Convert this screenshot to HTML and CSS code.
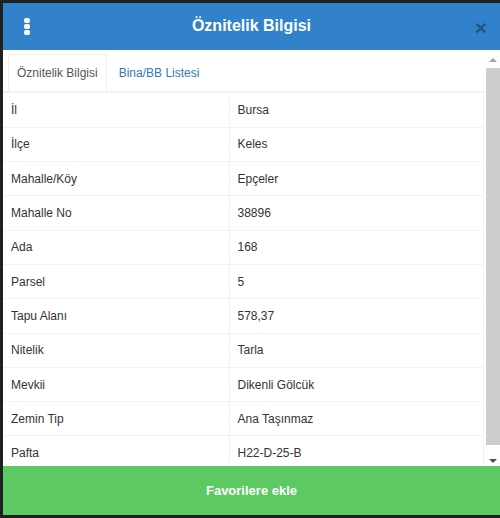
FILE: index.html
```html
<!DOCTYPE html>
<html lang="tr">
<head>
    <meta charset="UTF-8">
    <title>Öznitelik Bilgisi</title>
    <link rel="stylesheet" href="styles.css">
</head>
<body>
    <div class="modal">
        <div class="modal-header">
            <span class="menu-dots"><i></i><i></i><i></i></span>
            <h1>Öznitelik Bilgisi</h1>
            <span class="close">&times;</span>
        </div>

        <div class="modal-body">
            <div class="body-content">
                <ul class="tabs">
                    <li class="active">Öznitelik Bilgisi</li>
                    <li>Bina/BB Listesi</li>
                </ul>

                <table class="info-table">
                    <tr><td>İl</td><td>Bursa</td></tr>
                    <tr><td>İlçe</td><td>Keles</td></tr>
                    <tr><td>Mahalle/Köy</td><td>Epçeler</td></tr>
                    <tr><td>Mahalle No</td><td>38896</td></tr>
                    <tr><td>Ada</td><td>168</td></tr>
                    <tr><td>Parsel</td><td>5</td></tr>
                    <tr><td>Tapu Alanı</td><td>578,37</td></tr>
                    <tr><td>Nitelik</td><td>Tarla</td></tr>
                    <tr><td>Mevkii</td><td>Dikenli Gölcük</td></tr>
                    <tr><td>Zemin Tip</td><td>Ana Taşınmaz</td></tr>
                    <tr><td>Pafta</td><td>H22-D-25-B</td></tr>
                </table>
            </div>

            <!-- scrollbar drawn by hand, headless hides the native one -->
            <div class="scrollbar">
                <span class="arrow up"></span>
                <span class="thumb"></span>
                <span class="arrow down"></span>
            </div>
        </div>

        <button class="fav-btn">Favorilere ekle</button>
    </div>
</body>
</html>
```

FILE: styles.css
```css
* {
    margin: 0;
    padding: 0;
    box-sizing: border-box;
}

body {
    font-family: "Liberation Sans", Arial, sans-serif;
    font-size: 12px;
    color: #333;
    background: #1f2120;
    padding: 3px 0 0 3px;
    height: 518px;
    overflow: hidden;
}

.modal {
    width: 497px;
    height: 512px;
    background: white;
    display: flex;
    flex-direction: column;
}

.modal-header {
    height: 47px;
    background: #3182ca;
    display: grid;
    grid-template-columns: 1fr auto 1fr;
    align-items: center;
}

.menu-dots {
    display: flex;
    flex-direction: column;
    gap: 1px;
    margin-left: 21px;
}

.menu-dots i {
    width: 6px;
    height: 5px;
    border-radius: 2px;
    background: white;
}

.modal-header h1 {
    color: white;
    font-size: 16px;
    font-weight: bold;
    margin-top: -1px;
}

.close {
    justify-self: end;
    font-size: 21px;
    font-weight: bold;
    color: #000;
    opacity: 0.35;
    margin-right: 13px;
    line-height: 1;
    margin-top: 1px;
}

.modal-body {
    flex: 1;
    display: flex;
    overflow: hidden;
}

.body-content {
    flex: 1;
    overflow: hidden;
}

.tabs {
    list-style: none;
    display: flex;
    padding: 4px 0 0 5px;
    border-bottom: 2px solid #f1f1f1;
    height: 43px;
}

.tabs li {
    padding: 0 8px;
    line-height: 37px;
    color: #337ab7;
    border: 1px solid transparent;
    border-bottom: none;
}

.tabs li + li {
    margin-left: 3px;
}

.tabs li.active {
    color: #555;
    border-color: #eee;
}

.info-table {
    width: 481px;
    border-collapse: collapse;
}

.info-table td {
    height: 34.3px;
    padding: 0 8px;
    border-bottom: 1px solid #f2f2f2;
    vertical-align: middle;
}

.info-table td:first-child {
    width: 226px;
    border-right: 1px solid #f2f2f2;
}

.info-table td:last-child {
    border-right: 1px solid #f2f2f2;
}

.scrollbar {
    width: 15px;
    display: flex;
    flex-direction: column;
    padding-left: 1px;
}

.arrow {
    height: 17px;
    display: flex;
    align-items: center;
    justify-content: center;
}

.arrow::before {
    content: "";
    border-left: 4px solid transparent;
    border-right: 4px solid transparent;
}

.arrow.up::before {
    border-bottom: 4px solid #a3a3a3;
    margin-top: 3px;
}

.arrow.down::before {
    border-top: 4px solid #505050;
    margin-top: 7px;
}

.thumb {
    flex: 1;
    background: #cdcdcd;
    margin: 1px 0 4px;
}

.fav-btn {
    height: 49px;
    border: none;
    background: #5dc962;
    color: white;
    font-family: inherit;
    font-size: 13px;
    font-weight: bold;
    cursor: pointer;
}
```
